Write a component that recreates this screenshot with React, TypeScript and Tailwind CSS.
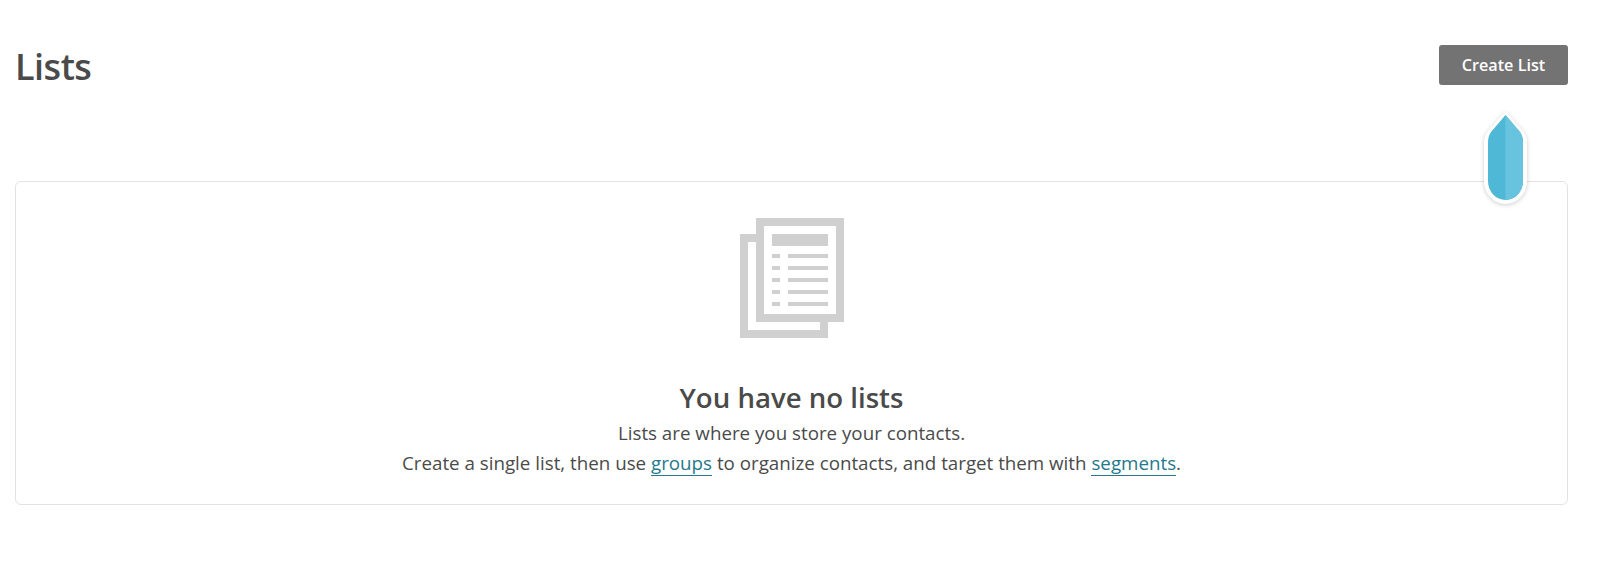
import React from 'react';

const ListsIcon = () => (
  <svg width="104" height="120" viewBox="0 0 104 120" fill="#d0d0d0" className="block">
    <path d="M0 16h16v8H8v88h72v-8h8v16H0z" />
    <path fillRule="evenodd" d="M16 0h88v104H16zM24 8v88h72V8z" />
    <rect x="32" y="16" width="56" height="12" />
    {[36, 48, 60, 72, 84].map((y) => (
      <g key={y}>
        <rect x="32" y={y} width="8" height="4" />
        <rect x="48" y={y} width="40" height="4" />
      </g>
    ))}
  </svg>
);

const Marker = () => (
  <svg width="45" height="95" viewBox="0 0 45 95" className="absolute left-[1483px] top-[110px] drop-shadow-[0_1px_2px_rgba(0,0,0,0.2)]">
    <path d="M22.5 1 L40 21 Q44 26 44 33 V71 A21.5 23 0 0 1 1 71 V33 Q1 26 5 21 Z" fill="#fff" />
    <path d="M22.5 5 L8 22 Q5 26 5 33 V71 A17.5 19 0 0 0 40 71 V33 Q40 26 37 22 Z" fill="#4fb8d6" />
    <path d="M22.5 5 L37 22 Q40 26 40 33 V71 A17.5 19 0 0 1 22.5 90 Z" fill="#68c3de" />
  </svg>
);

export default function App() {
  return (
    <div className="relative h-[565px] bg-white font-['Open_Sans','Noto_Sans',sans-serif] text-[#4a4a4a] overflow-hidden">
      <div className="w-[1568px] pl-[15px] pt-[45px]">
        <div className="flex items-start justify-between">
          <h1 className="text-[36px] leading-[44px] font-semibold tracking-[-0.5px]">Lists</h1>
          <button className="w-[129px] h-10 rounded-[3px] bg-[#737373] text-white text-[16.2px] leading-[38px] font-semibold">
            Create List
          </button>
        </div>

        <div className="mt-[92px] h-[324px] rounded-md border border-[#e3e3e3] flex flex-col items-center pt-[36px]">
          <ListsIcon />
          <h2 className="mt-[41px] text-[27.6px] leading-[36px] font-semibold">You have no lists</h2>
          <p className="mt-[3px] text-[18.75px] leading-[30px] text-center">
            Lists are where you store your contacts.
            <br />
            Create a single list, then use{' '}
            <a className="text-[#25788c] border-b border-[#25788c]">groups</a> to organize contacts, and target them with{' '}
            <a className="text-[#25788c] border-b border-[#25788c]">segments</a>.
          </p>
        </div>
      </div>
      <Marker />
    </div>
  );
}
